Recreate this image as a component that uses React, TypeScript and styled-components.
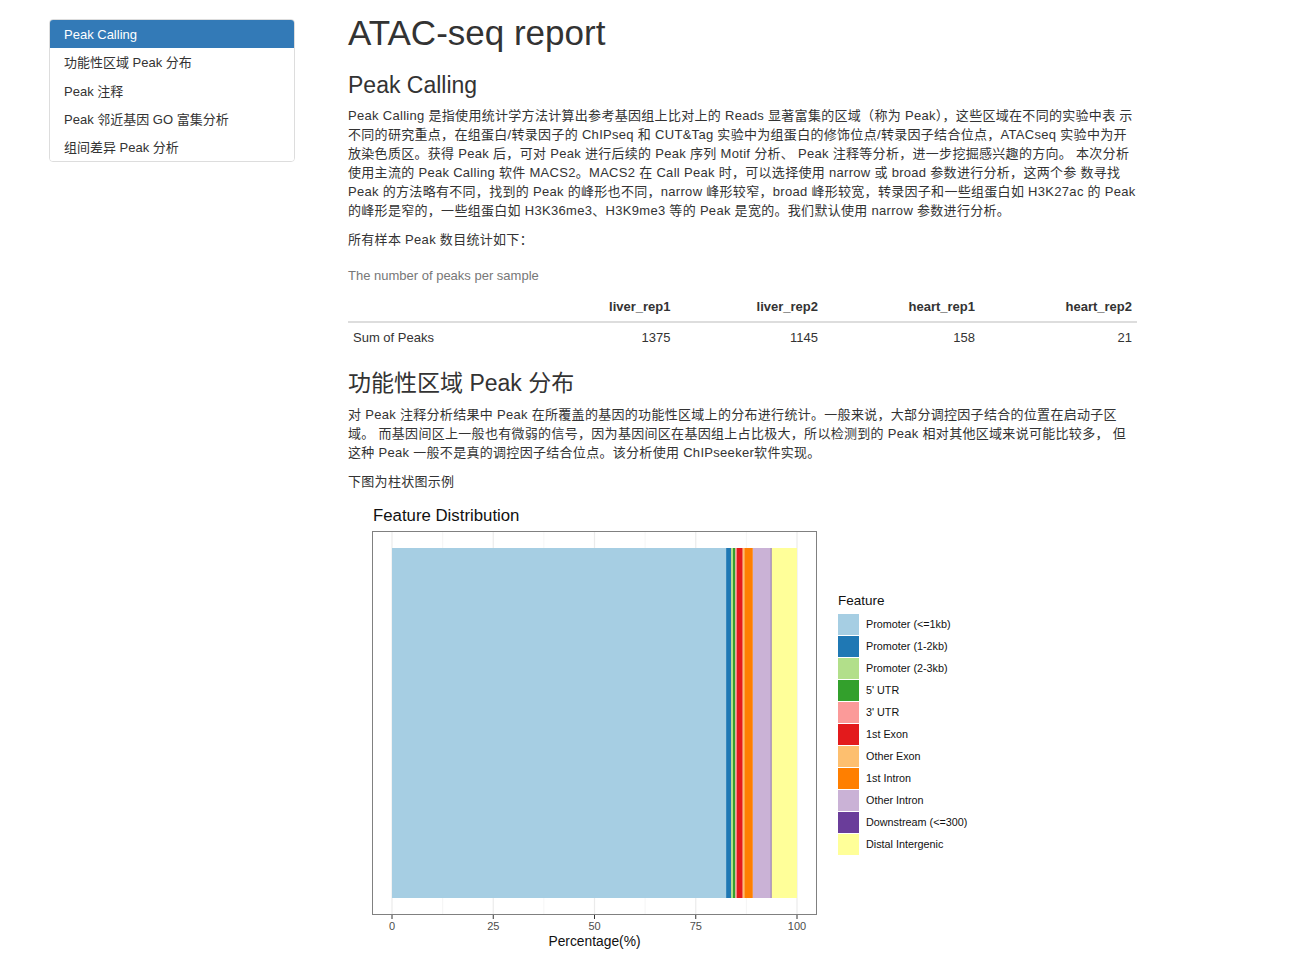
import React from "react"
import styled, { createGlobalStyle } from "styled-components"

const GlobalStyle = createGlobalStyle`
html, body {
  margin: 0;
  padding: 0;
  background: #fff;
}
body {
  font-family: "Liberation Sans", Arial, "Noto Sans CJK SC", sans-serif;
  font-size: 13px;
  line-height: 19px;
  color: #333;
}
`

const Page = styled.div`
display: flex;
flex-flow: row nowrap;
align-items: flex-start;
gap: 53px;
padding: 14px 0 0 49px;
`

const Sidebar = styled.ul`
list-style: none;
margin: 5px 0 0 0;
padding: 0;
width: 244px;
border: 1px solid #ddd;
border-radius: 4px;
overflow: hidden;
flex-shrink: 0;
`

const NavItem = styled.li<{ $active?: boolean }>`
height: 28.25px;
line-height: 29px;
padding: 0 14px;
color: ${(p) => (p.$active ? "#fff" : "#333")};
background: ${(p) => (p.$active ? "#337ab7" : "#fff")};
white-space: nowrap;
`

const Main = styled.main`
width: 810px;
`

const Title = styled.h1`
font-size: 35px;
font-weight: 400;
line-height: 1.1;
margin: 0;
`

const H2 = styled.h2`
font-size: 23px;
font-weight: 400;
line-height: 1.1;
margin: 20px 0 8px;
`

const H3 = styled(H2)`
margin: 19px 0 9px;
`

const P = styled.p`
margin: 0 0 10px;
white-space: nowrap;
letter-spacing: 0.3px;
`

const Table = styled.table`
width: 789px;
border-collapse: collapse;
margin-bottom: 0;
`

const Caption = styled.caption`
text-align: left;
color: #777;
padding: 7px 0 7px;
`

const Th = styled.th<{ $w?: number }>`
text-align: right;
font-weight: bold;
padding: 5px;
border-bottom: 2px solid #ddd;
width: ${(p) => (p.$w ? `${p.$w}px` : "auto")};
`

const Td = styled.td<{ $left?: boolean }>`
text-align: ${(p) => (p.$left ? "left" : "right")};
padding: 5px;
`

const Chart = styled.svg`
display: block;
font-family: "Liberation Sans", Arial, sans-serif;
`

const segments = [
  { name: "Promoter (<=1kb)", color: "#A6CEE3", pct: 82.5 },
  { name: "Promoter (1-2kb)", color: "#1F78B4", pct: 1.2 },
  { name: "Promoter (2-3kb)", color: "#B2DF8A", pct: 0.5 },
  { name: "5' UTR", color: "#33A02C", pct: 0.6 },
  { name: "3' UTR", color: "#FB9A99", pct: 0.3 },
  { name: "1st Exon", color: "#E31A1C", pct: 1.5 },
  { name: "Other Exon", color: "#FDBF6F", pct: 0.4 },
  { name: "1st Intron", color: "#FF7F00", pct: 2.1 },
  { name: "Other Intron", color: "#CAB2D6", pct: 4.4 },
  { name: "Downstream (<=300)", color: "#6A3D9A", pct: 0.25 },
  { name: "Distal Intergenic", color: "#FFFF99", pct: 6.25 },
]

const FeatureChart: React.FC = () => {
  const x0 = 44
  const x1 = 449
  const sx = (v: number) => x0 + ((x1 - x0) * v) / 100
  let acc = 0
  return (
    <Chart width="640" height="454" viewBox="0 0 640 454">
      <text x="25" y="20" fontSize="16.8" fill="#111">Feature Distribution</text>
      <rect x="24.5" y="30.5" width="444" height="383" fill="#fff" />
      {[12.5, 37.5, 62.5, 87.5].map((v) => (
        <line key={v} x1={sx(v)} x2={sx(v)} y1="31" y2="413" stroke="#f3f3f3" strokeWidth="0.8" />
      ))}
      {[0, 25, 50, 75, 100].map((v) => (
        <line key={v} x1={sx(v)} x2={sx(v)} y1="31" y2="413" stroke="#ebebeb" strokeWidth="1.2" />
      ))}
      {segments.map((s) => {
        const left = sx(acc)
        acc += s.pct
        return <rect key={s.name} x={left} y="47" width={sx(acc) - left} height="350" fill={s.color} />
      })}
      <rect x="24.5" y="30.5" width="444" height="383" fill="none" stroke="#808080" strokeWidth="1" />
      {[0, 25, 50, 75, 100].map((v) => (
        <g key={v}>
          <line x1={sx(v)} x2={sx(v)} y1="414" y2="418" stroke="#333" strokeWidth="1" />
          <text x={sx(v)} y="429" fontSize="11" fill="#4d4d4d" textAnchor="middle">{v}</text>
        </g>
      ))}
      <text x={sx(50)} y="445" fontSize="13.8" fill="#111" textAnchor="middle">Percentage(%)</text>
      <text x="490" y="104" fontSize="13.5" fill="#111">Feature</text>
      {segments.map((s, i) => (
        <g key={s.name}>
          <rect x="490" y={113 + i * 22} width="21" height="21" fill={s.color} />
          <text x="518" y={127 + i * 22} fontSize="10.8" fill="#111">{s.name}</text>
        </g>
      ))}
    </Chart>
  )
}

const App: React.FC = () => {
  return (
    <>
      <GlobalStyle />
      <Page>
        <Sidebar>
          <NavItem $active>Peak Calling</NavItem>
          <NavItem>功能性区域 Peak 分布</NavItem>
          <NavItem>Peak 注释</NavItem>
          <NavItem>Peak 邻近基因 GO 富集分析</NavItem>
          <NavItem>组间差异 Peak 分析</NavItem>
        </Sidebar>
        <Main>
          <Title>ATAC-seq report</Title>
          <H2>Peak Calling</H2>
          <P>
            Peak Calling 是指使用统计学方法计算出参考基因组上比对上的 Reads 显著富集的区域（称为 Peak），这些区域在不同的实验中表 示<br />
            不同的研究重点，在组蛋白/转录因子的 ChIPseq 和 CUT&amp;Tag 实验中为组蛋白的修饰位点/转录因子结合位点，ATACseq 实验中为开<br />
            放染色质区。获得 Peak 后，可对 Peak 进行后续的 Peak 序列 Motif 分析、 Peak 注释等分析，进一步挖掘感兴趣的方向。 本次分析<br />
            使用主流的 Peak Calling 软件 MACS2。MACS2 在 Call Peak 时，可以选择使用 narrow 或 broad 参数进行分析，这两个参 数寻找<br />
            Peak 的方法略有不同，找到的 Peak 的峰形也不同，narrow 峰形较窄，broad 峰形较宽，转录因子和一些组蛋白如 H3K27ac 的 Peak<br />
            的峰形是窄的，一些组蛋白如 H3K36me3、H3K9me3 等的 Peak 是宽的。我们默认使用 narrow 参数进行分析。
          </P>
          <P>所有样本 Peak 数目统计如下：</P>
          <Table>
            <Caption>The number of peaks per sample</Caption>
            <thead>
              <tr>
                <Th $w={185}></Th>
                <Th $w={146}>liver_rep1</Th>
                <Th $w={146}>liver_rep2</Th>
                <Th $w={156}>heart_rep1</Th>
                <Th $w={156}>heart_rep2</Th>
              </tr>
            </thead>
            <tbody>
              <tr>
                <Td $left>Sum of Peaks</Td>
                <Td>1375</Td>
                <Td>1145</Td>
                <Td>158</Td>
                <Td>21</Td>
              </tr>
            </tbody>
          </Table>
          <H3 as="h3">功能性区域 Peak 分布</H3>
          <P>
            对 Peak 注释分析结果中 Peak 在所覆盖的基因的功能性区域上的分布进行统计。一般来说，大部分调控因子结合的位置在启动子区<br />
            域。 而基因间区上一般也有微弱的信号，因为基因间区在基因组上占比极大，所以检测到的 Peak 相对其他区域来说可能比较多， 但<br />
            这种 Peak 一般不是真的调控因子结合位点。该分析使用 ChIPseeker软件实现。
          </P>
          <P>下图为柱状图示例</P>
          <FeatureChart />
        </Main>
      </Page>
    </>
  )
}

export default App
